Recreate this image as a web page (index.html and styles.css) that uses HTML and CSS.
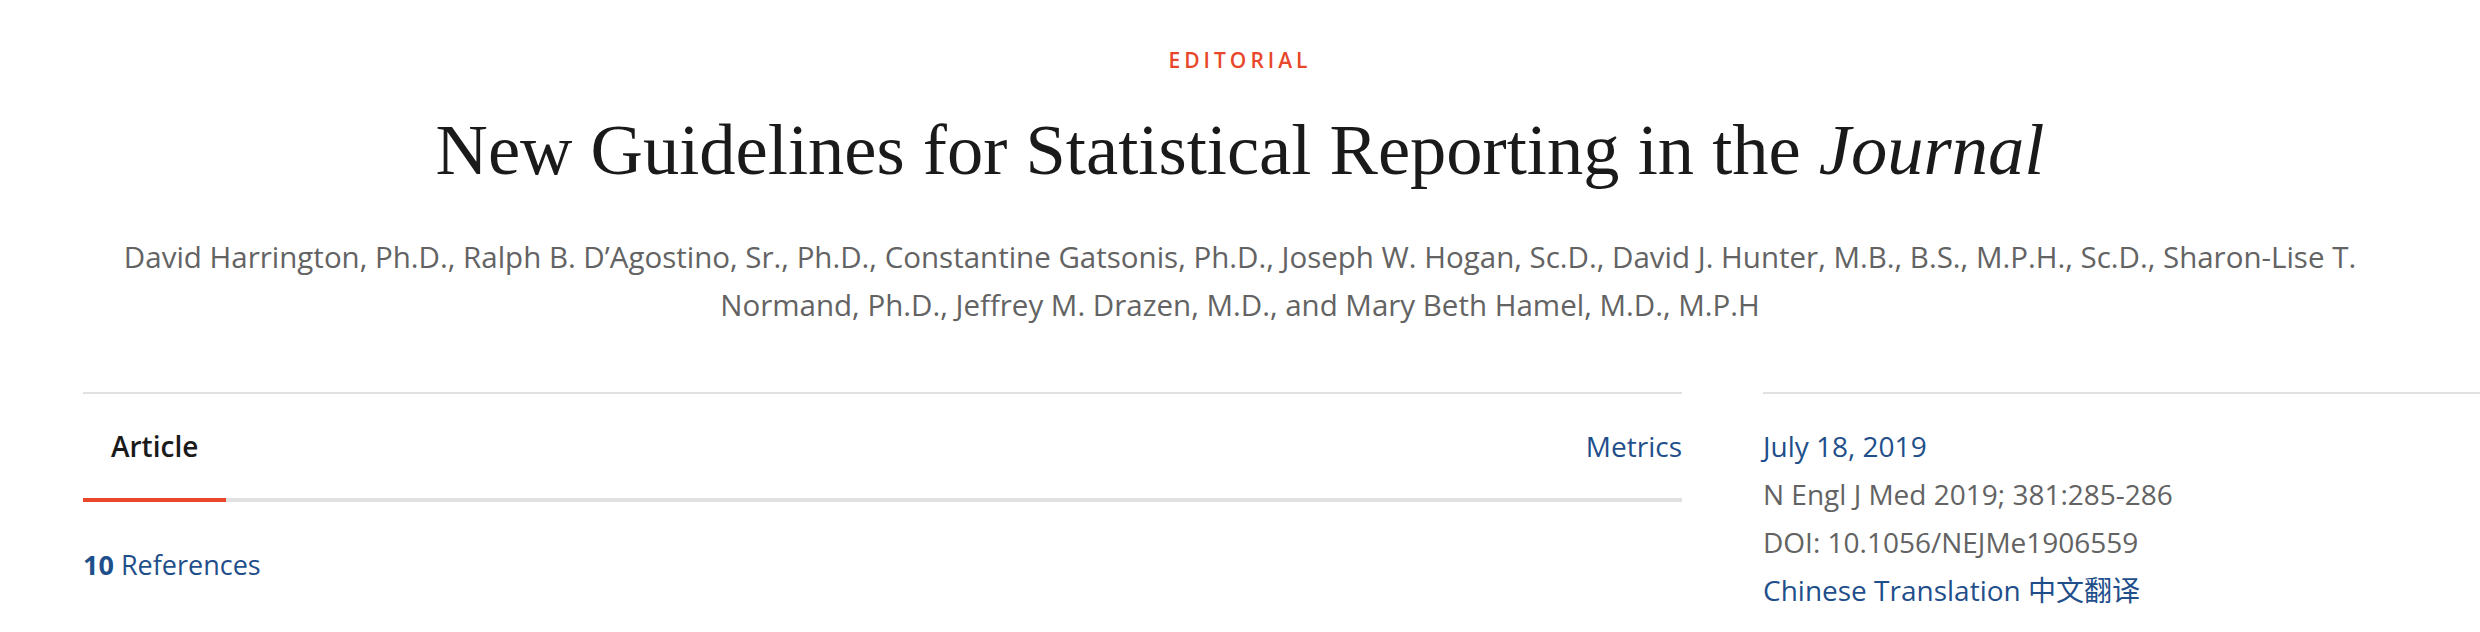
FILE: index.html
```html
<!DOCTYPE html>
<html lang="en">

<head>
    <meta charset="UTF-8">
    <meta name="viewport" content="width=device-width, initial-scale=1.0">
    <title>New Guidelines for Statistical Reporting in the Journal</title>
    <link rel="stylesheet" href="styles.css">
</head>

<body>
    <header class="article-header">
        <p class="kicker">Editorial</p>
        <h1 class="title">New Guidelines for Statistical Reporting in the <em>Journal</em></h1>
        <p class="authors">David Harrington, Ph.D., Ralph B. D’Agostino, Sr., Ph.D., Constantine Gatsonis, Ph.D., Joseph W. Hogan, Sc.D., David J. Hunter, M.B., B.S., M.P.H., Sc.D., Sharon-Lise T. Normand, Ph.D., Jeffrey M. Drazen, M.D., and Mary Beth Hamel, M.D., M.P.H</p>
    </header>

    <div class="content">
        <main class="main-col">
            <nav class="tabs">
                <a class="tab active" href="#">Article</a>
                <a class="tab" href="#">Metrics</a>
            </nav>
            <a class="refs" href="#"><strong>10</strong> References</a>
        </main>

        <aside class="meta">
            <a class="meta-line" href="#">July 18, 2019</a>
            <p class="meta-line muted">N Engl J Med 2019; 381:285-286</p>
            <p class="meta-line muted">DOI: 10.1056/NEJMe1906559</p>
            <a class="meta-line" href="#">Chinese Translation 中文翻译</a>
        </aside>
    </div>
</body>

</html>
```

FILE: styles.css
```css
body {
    font-family: "Open Sans", "Noto Sans CJK SC", sans-serif;
    background-color: #fff;
    color: #1a1a1a;
    margin: 0;
    padding: 45px 0 0;
}

a {
    color: #1f4f8b;
    text-decoration: none;
}

p {
    margin: 0;
}

.article-header {
    text-align: center;
}

.kicker {
    font-size: 21px;
    font-weight: 600;
    line-height: 30px;
    letter-spacing: 4px;
    text-transform: uppercase;
    color: #e8472b;
}

.title {
    margin: 32px 0 0;
    font-family: "Liberation Serif", serif;
    font-size: 72.5px;
    font-weight: 400;
    line-height: 86px;
    color: #1a1a1a;
}

.authors {
    max-width: 2270px;
    margin: 40px auto 0;
    font-size: 29.5px;
    line-height: 48px;
    color: #636363;
}

.content {
    display: flex;
    gap: 81px;
    margin-top: 63px;
    padding-left: 83px;
}

.main-col {
    width: 1599px;
    border-top: 2px solid #e1e1e1;
}

.tabs {
    display: flex;
    justify-content: space-between;
    border-bottom: 4px solid #e1e1e1;
}

.tab {
    padding: 28px 28px;
    font-size: 28px;
    line-height: 48px;
}

.tab:last-child {
    padding-right: 0;
}

.tab.active {
    color: #1a1a1a;
    font-weight: 600;
    border-bottom: 4px solid #e8472b;
    margin-bottom: -4px;
    padding-bottom: 28px;
}

.refs {
    display: block;
    margin-top: 39px;
    font-size: 27px;
    line-height: 48px;
}

.meta {
    flex: 1;
    padding-top: 28px;
    border-top: 2px solid #e1e1e1;
}

.meta-line {
    display: block;
    font-size: 28px;
    line-height: 48px;
}

.muted {
    color: #636363;
}
```
